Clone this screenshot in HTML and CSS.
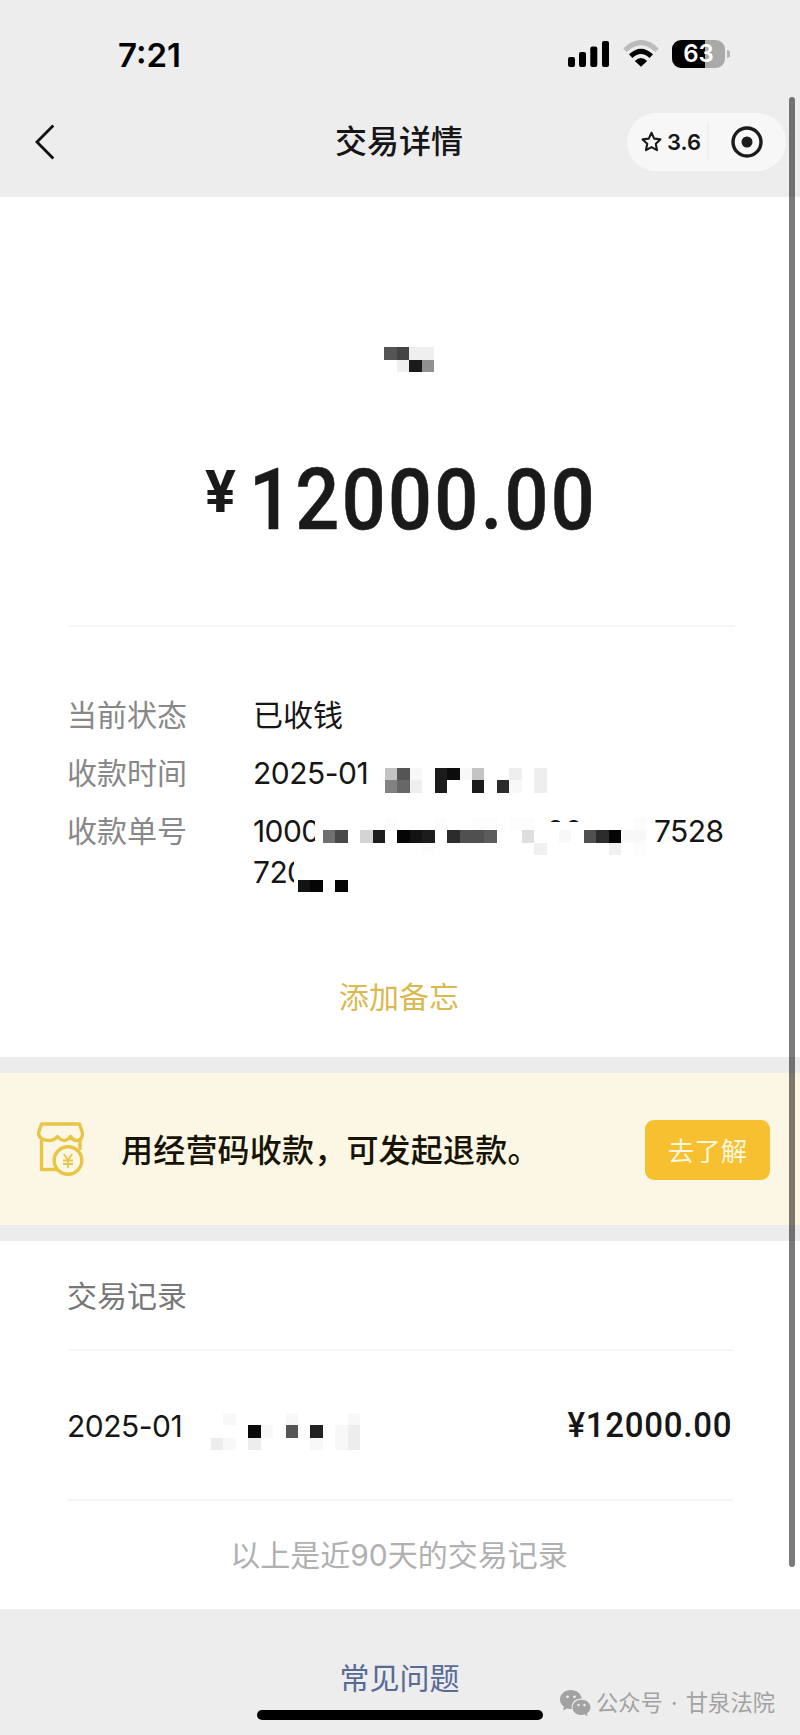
FILE: index.html
```html
<!DOCTYPE html>
<html lang="zh-CN">
<head>
<meta charset="utf-8">
<title>交易详情</title>
<link rel="stylesheet" href="styles.css">
</head>
<body>
<div class="screen">
  <header class="top">
    <div class="status">
      <span class="clock">7:21</span>
      <svg class="signal" width="41" height="26" viewBox="0 0 41 26"><rect y="16" width="7" height="10" rx="2"/><rect x="11" y="11" width="7" height="15" rx="2"/><rect x="22.3" y="5.5" width="7" height="20.5" rx="2"/><rect x="34" width="7" height="26" rx="2"/></svg>
      <svg class="wifi" width="36" height="27" viewBox="0 0 36 27"><path d="M2 10.2Q18-5 34 10.2" fill="none" stroke="#bbb" stroke-width="5"/><path d="M7.7 16.2Q18 6.6 28.3 16.2" fill="none" stroke="#000" stroke-width="5"/><path d="M11.8 21Q18 15 24.2 21L18 26.8z"/></svg>
      <span class="battery">63</span><span class="battery-cap"></span>
    </div>
    <nav class="nav">
      <svg class="back" width="20" height="36" viewBox="0 0 20 36"><path d="M18.3 1.5L2 18l16.3 16.5" fill="none" stroke="#111" stroke-width="2.8"/></svg>
      <h1 class="title">交易详情</h1>
      <div class="capsule">
        <svg width="21" height="22" viewBox="0 0 21 22"><path d="M10.5 1.8l2.7 5.8 6.2.8-4.6 4.3 1.2 6.5-5.500-3.100L5 19.200l1.200-6.500-4.600-4.300 6.200-.8z" fill="none" stroke="#1b1b1b" stroke-width="2.1" stroke-linejoin="round"/></svg>
        <span class="score">3.6</span><i class="split"></i>
        <svg class="target" width="32" height="32" viewBox="0 0 32 32"><circle cx="16" cy="16" r="14" fill="none" stroke="#1b1b1b" stroke-width="3.4"/><circle cx="16" cy="16" r="5.5" fill="#1b1b1b"/></svg>
      </div>
    </nav>
  </header>

  <main>
    <section class="detail">
      <svg class="name" width="50" height="25" viewBox="0 0 4 2" shape-rendering="crispEdges"><path fill="#555" d="M0 0h1v1H0z"/><path fill="#444" d="M1 0h1v1H1z"/><path fill="#efefef" d="M2 0h2v1H2zM1 1h1v1H1z"/><path fill="#1a1a1a" d="M2 1h1v1H2z"/><path fill="#909090" d="M3 1h1v1H3z"/></svg>
      <div class="amount"><span class="yen">¥</span><span class="sum">12000.00</span></div>
      <dl class="fields">
        <dt>当前状态</dt><dd>已收钱</dd>
        <dt>收款时间</dt><dd class="num">2025-01</dd>
        <dt>收款单号</dt>
        <dd class="num order"><span>1000</span><span class="mid">00</span><span>7528</span><span class="second">720</span></dd>
        <svg class="mask" width="348" height="124.3" viewBox="-7 0 28 10" preserveAspectRatio="none" shape-rendering="crispEdges">
          <path fill="#fff" d="M-5.600 4h2v3h-2zM13 4.350h5.500V7H13zM-7.300 7.500h3v2.500h-3z"/>
          <path fill="#c3c3c3" d="M0 0h1v1H0zM7 0h1v1H7z"/><path fill="#555" d="M1 0h1v1H1z"/><path fill="#828282" d="M0 1h1v1H0z"/><path fill="#676767" d="M1 1h1v1H1z"/>
          <path fill="#f8f8f8" d="M2 0h1v1H2zM6 0h1v1H6zM10 1h1v1h-1z"/><path fill="#eee" d="M2 1h1v1H2zM10 0h1v1h-1zM12 0h1v2h-1z"/>
          <path fill="#1b1b1b" d="M4 0h1v2H4zM7 1h1v1H7z"/><path fill="#0c0c0c" d="M5 0h1v1H5z"/><path fill="#2b2b2b" d="M9 1h1v1H9z"/>
          <path fill="#707070" d="M-5 5h1v1h-1z"/><path fill="#484848" d="M-4 5h1v1h-1z"/><path fill="#d4d4d4" d="M-2 5h1v1h-1z"/><path fill="#1c1c1c" d="M-1 5h1v1h-1zM3 5h1v1H3z"/>
          <path fill="#050505" d="M1 5h1v1H1zM18 5h1v1h-1zM-6 9h1v1h-1zM-4 9h1v1h-1z"/><path fill="#131313" d="M2 5h1v1H2zM-7 9h1v1h-1z"/><path fill="#2c2c2c" d="M5 5h1v1H5zM17 5h1v1h-1z"/>
          <path fill="#505050" d="M6 5h2v1H6zM16 5h1v1h-1z"/><path fill="#5c5c5c" d="M8 5h1v1H8z"/><path fill="#dedede" d="M11 5h1v1h-1z"/><path fill="#f8f8f8" d="M14 5h1v1h-1zM19 5h2v1h-2z"/><path fill="#f0f0f0" d="M12 6h1v1h-1zM18 6h1v1h-1z"/><path fill="#fcfcfc" d="M0 4h1v1H0zM4 4h1v1H4zM7 4h2v1H7zM10 4h2v1h-2zM20 4h1v1h-1zM3 6h1v1H3zM20 6h1v1h-1z"/>
        </svg>
      </dl>
      <a class="memo">添加备忘</a>
    </section>

    <section class="promo">
      <svg class="shop" width="48" height="54" viewBox="0 0 48 54" fill="none" stroke="#e9c545" stroke-width="3.400" stroke-linejoin="round"><path d="M4.500 2h38l3 9q0 7.500-6 7.500-3.500 0-6-4-3.500 4-6.500 4t-6.500-4q-3.500 4-7 4-12 0-12-7.500z"/><path d="M4.500 18v29.500h17M43 18v10"/><circle cx="31" cy="38.500" r="13.800" fill="#fdf8e6"/><path d="M26.800 32l4.200 6 4.200-6M31 38v8M26 38.500h10M26 42h10" stroke-width="1.800"/></svg>
      <strong class="pitch">用经营码收款，可发起退款。</strong>
      <button class="learn">去了解</button>
    </section>

    <section class="records">
      <h2 class="heading">交易记录</h2>
      <div class="record">
        <span class="num">2025-01</span>
        <svg class="stamp" width="149" height="37.300" viewBox="-3 -1 12 3" preserveAspectRatio="none" shape-rendering="crispEdges"><path fill="#0a0a0a" d="M0 0h1v1H0z"/><path fill="#555" d="M3 0h1v1H3z"/><path fill="#222" d="M5 0h1v1H5z"/><path fill="#f8f8f8" d="M-2-1h1v1h-1zM3-1h1v1H3zM8-1h1v1H8zM1 0h1v1H1zM7 0h1v2H7zM-2 1h1v1h-1zM5 1h1v1H5z"/><path fill="#ededed" d="M-3 1h1v1h-1zM0 1h1v1H0zM8 0h1v2H8z"/></svg>
        <span class="paid">¥12000.00</span>
      </div>
      <p class="note">以上是近90天的交易记录</p>
    </section>
  </main>

  <footer class="foot">
    <a class="faq">常见问题</a>
    <div class="home"></div>
    <div class="watermark">
      <svg width="31" height="26" viewBox="0 0 31 26"><path fill="#a2a2a2" d="M11 0C4.800 0 0 4.200 0 9.500c0 3 1.600 5.600 4 7.300L3 20.500l4-2.100c1.600.5 3 .6 4.700.6C11 12.500 15 8.500 21.700 8.500 21 3.500 16.500 0 11 0z"/><path fill="#a2a2a2" d="M21.500 9.700c-5 0-9 3.500-9 7.700s4 7.700 9 7.700c1.100 0 2.200-.2 3.200-.5l3 1.700-.8-3c2.200-1.400 3.600-3.500 3.600-5.900 0-4.200-4-7.700-9-7.700z"/><g fill="#eee"><circle cx="7.500" cy="6.800" r="1.400"/><circle cx="14.500" cy="6.800" r="1.400"/><circle cx="18.500" cy="15" r="1.200"/><circle cx="24.500" cy="15" r="1.200"/></g></svg>
      <span>公众号</span><span class="dot">·</span><span>甘泉法院</span>
    </div>
  </footer>
  <div class="scrollbar"></div>
</div>
</body>
</html>
```
FILE: styles.css
```css
* { box-sizing: border-box; margin: 0; padding: 0; }
body {
  width: 800px;
  background: #ededed;
  color: #161616;
  font-family: Inter, "Noto Sans CJK SC", sans-serif;
  font-size: 30px;
}
svg { display: block; flex: none; }
.screen { position: relative; height: 1735px; overflow: hidden; }

.top { height: 197px; }
.status { display: flex; align-items: flex-start; height: 98px; padding: 40px 70px 0 118px; color: #000; }
.clock { width: 450px; font-size: 33px; font-weight: 600; line-height: 30px; }
.signal { margin-top: 1px; }
.wifi { margin-left: 14px; }
.battery {
  width: 53px; height: 28px; margin-left: 13px;
  border-radius: 9px;
  background: linear-gradient(90deg, #000 63%, #a9a9a9 63%);
  color: #fff; font-size: 24px; font-weight: 600; line-height: 28px; text-align: center;
}
.battery-cap { width: 3px; height: 8px; margin: 10px 0 0 2px; border-radius: 0 4px 4px 0; background: #b5b5b5; }

.nav { display: flex; align-items: center; height: 87px; padding: 0 14px 0 35px; }
.title { margin-left: 280px; font-size: 32px; font-weight: 500; line-height: 40px; white-space: nowrap; }
.capsule { display: flex; align-items: center; width: 159px; height: 58px; margin-left: auto; padding-left: 14px; border-radius: 29px; background: #f7f7f7; }
.score { width: 40px; margin-left: 5px; font-size: 22px; font-weight: 600; line-height: 26px; white-space: nowrap; }
.split { width: 2px; height: 39px; background: #f0f0f0; }
.target { margin-left: 22px; }

.detail { height: 860px; padding: 150px 65px 0 68px; background: #fff; }
.name { margin-left: 316px; }
.amount { display: flex; height: 255px; padding: 84px 0 0 137px; border-bottom: 2px solid #f6f6f6; font-family: Roboto, sans-serif; font-weight: 500; color: #1a1a1a; }
.yen { width: 44px; margin-top: 1px; font-size: 60px; font-weight: 700; line-height: 70px; transform: scaleX(.96); transform-origin: left; }
.sum { font-size: 85px; line-height: 88px; letter-spacing: 2.600px; transform: scaleX(.91); transform-origin: left; -webkit-text-stroke: .6px #1a1a1a; }

.fields { display: grid; position: relative; grid-template-columns: 186px 1fr; grid-template-rows: 58px 58px 94px; margin: 59px 0 0 -1px; line-height: 58px; }
.fields dt { color: #888; }
.num { letter-spacing: -.5px; }
.order { display: grid; grid-template-columns: 61px 340px 80px; grid-template-rows: 58px 36px; line-height: 58px; }
.order span { letter-spacing: -.6px; }
.mid { margin-left: 232px; }
.order .second { line-height: 24px; }
.mask { position: absolute; left: 230.500px; top: 82px; overflow: visible; }
.memo { display: block; margin: 79px 5px 0 0; line-height: 44px; text-align: center; color: #d9b950; }

.promo { display: flex; align-items: center; height: 184px; padding: 3px 30px 0 37px; border: solid #ececec; border-width: 16px 0; background: #fcf7e4; }
.shop { margin-top: -3px; }
.pitch { margin-left: 36px; font-size: 32px; font-weight: 500; line-height: 44px; letter-spacing: .2px; white-space: nowrap; color: #171407; }
.learn { width: 125px; height: 60px; margin: -1px 0 0 auto; border: 0; border-radius: 9px; background: #f6c031; color: #fff7dc; font: 400 26.500px/58px "Noto Sans CJK SC", sans-serif; }

.records { height: 368px; padding: 0 67px 0 68px; background: #fff; }
.heading { height: 110px; padding-top: 33px; border-bottom: 2px solid #f5f5f5; color: #777; font-size: 30px; font-weight: 400; line-height: 44px; text-indent: -1px; }
.record { display: flex; align-items: center; height: 150px; border-bottom: 2px solid #f5f5f5; }
.record .num { width: 143px; padding-top: 2px; text-indent: -1px; }
.stamp { margin-top: 13px; }
.paid { margin: 0 1px 0 auto; font: 500 35.500px/40px Roboto, sans-serif; letter-spacing: .8px; transform: scaleX(.93); transform-origin: right; }
.note { margin: 32px 3px 0 0; line-height: 44px; text-align: center; color: #b0b0b0; }

.foot { display: flex; position: relative; flex-direction: column; align-items: center; height: 126px; padding: 47px 1px 0 0; }
.faq { color: #576b95; line-height: 44px; }
.home { width: 286px; height: 10px; margin-top: 10px; border-radius: 5px; background: #000; }
.watermark { display: flex; position: absolute; right: 25px; bottom: 16px; align-items: center; color: #a2a2a2; font-size: 22.300px; line-height: 32px; }
.watermark svg { margin-right: 5px; }
.dot { width: 23px; text-align: center; }
.scrollbar { position: absolute; left: 789px; top: 97px; width: 6px; height: 1470px; border-radius: 3px; background: rgba(0, 0, 0, .52); }
```
